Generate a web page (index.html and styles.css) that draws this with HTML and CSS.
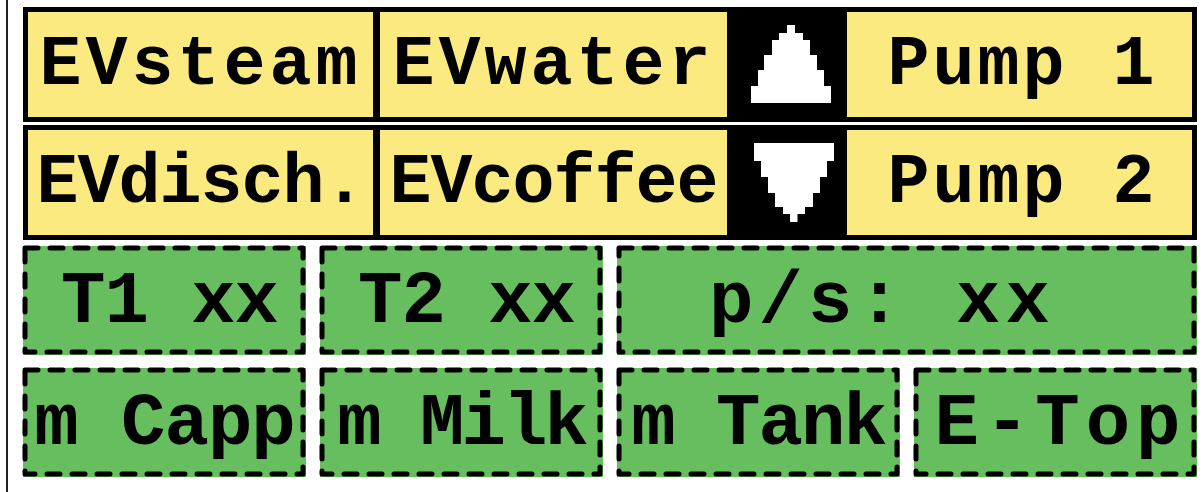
FILE: index.html
```html
<!DOCTYPE html>
<html lang="en">
<head>
  <meta charset="UTF-8" />
  <title>Machine panel</title>
  <link rel="stylesheet" href="styles.css">
</head>
<body>
  <div class="screen">

    <div class="keys">
      <div class="key-row">
        <div class="key wide">EVsteam</div>
        <div class="key wide">EVwater</div>
        <div class="arrow">
          <svg viewBox="0 0 120 105" width="120" height="105">
            <polygon points="24,91 24,74 31,74 31,58 37,58 37,43 45,43 45,28 52,28 52,21 60,21 60,13 68,13 68,21 76,21 76,28 83,28 83,43 90,43 90,58 97,58 97,74 104,74 104,91" />
          </svg>
        </div>
        <div class="key pump">Pump 1</div>
      </div>

      <div class="key-row">
        <div class="key snug">EVdisch.</div>
        <div class="key tight">EVcoffee</div>
        <div class="arrow">
          <svg viewBox="0 0 120 105" width="120" height="105">
            <polygon points="27,13 107,13 107,31 100,31 100,47 93,47 93,63 86,63 86,77 78,77 78,84 70.5,84 70.5,92 63,92 63,84 56,84 56,77 48,77 48,63 41,63 41,47 34,47 34,31 27,31" />
          </svg>
        </div>
        <div class="key pump">Pump 2</div>
      </div>
    </div>

    <div class="readouts">
      <div class="cell t-val"><svg class="dash"><rect width="100%" height="100%" /></svg>T1 xx</div>
      <div class="cell t-val"><svg class="dash"><rect width="100%" height="100%" /></svg>T2 xx</div>
      <div class="cell span2 ps"><svg class="dash"><rect width="100%" height="100%" /></svg>p/s: xx</div>

      <div class="cell capp"><svg class="dash"><rect width="100%" height="100%" /></svg>m Capp</div>
      <div class="cell milk"><svg class="dash"><rect width="100%" height="100%" /></svg>m Milk</div>
      <div class="cell tank"><svg class="dash"><rect width="100%" height="100%" /></svg>m Tank</div>
      <div class="cell etop"><svg class="dash"><rect width="100%" height="100%" /></svg>E-Top</div>
    </div>

  </div>
</body>
</html>
```

FILE: styles.css
```css
body {
  margin: 0;
  background: #fff;
  font-family: 'Liberation Mono', 'Courier New', monospace;
  font-weight: bold;
  color: #000;
}

.screen {
  margin-left: 6px;
  border-left: 2px solid #222;
  padding: 7px 0 0 15px;
  height: 485px;
  width: 1174px;
}

/* yellow key rows */
.keys {
  display: flex;
  flex-direction: column;
  gap: 3px;
}

.key-row {
  display: grid;
  grid-template-columns: 352px 347px 120px 345px;
  height: 105px;
  border: 5px solid #000;
  background: #000;
}

.key {
  background: #fbea80;
  display: flex;
  align-items: center;
  justify-content: center;
  font-size: 70px;
  padding-top: 2px;
  white-space: pre;
}

.key:first-child {
  border-right: 7px solid #000;
}

.key.wide { letter-spacing: 4px; }
.key.snug { letter-spacing: -1px; }
.key.tight { letter-spacing: -1px; }
.key.pump { letter-spacing: 3px; padding-left: 6px; }

.arrow {
  background: #000;
  display: flex;
}

.arrow polygon {
  fill: #fff;
}

/* green read-outs */
.readouts {
  margin-top: 6px;
  display: grid;
  grid-template-columns: repeat(4, 283px);
  grid-auto-rows: 109px;
  column-gap: 14px;
  row-gap: 13px;
}

.cell {
  position: relative;
  background: #67be5f;
  display: flex;
  align-items: center;
  justify-content: center;
  font-size: 74px;
  padding-top: 2px;
  white-space: pre;
}

.cell.span2 { grid-column: span 2; }

.cell.t-val { letter-spacing: -1px; padding-left: 10px; }
.cell.ps { letter-spacing: 5px; padding-right: 50px; }
.cell.capp { letter-spacing: -1px; }
.cell.milk { letter-spacing: -3px; }
.cell.tank { letter-spacing: -2px; }
.cell.etop { letter-spacing: 6px; padding-left: 10px; }

.dash {
  position: absolute;
  top: 2px;
  left: 2px;
  width: calc(100% - 5px);
  height: calc(100% - 5px);
  overflow: visible;
}

.dash rect {
  fill: none;
  stroke: #000;
  stroke-width: 5;
  stroke-dasharray: 13 12;
  stroke-linecap: round;
  stroke-linejoin: round;
}
```
